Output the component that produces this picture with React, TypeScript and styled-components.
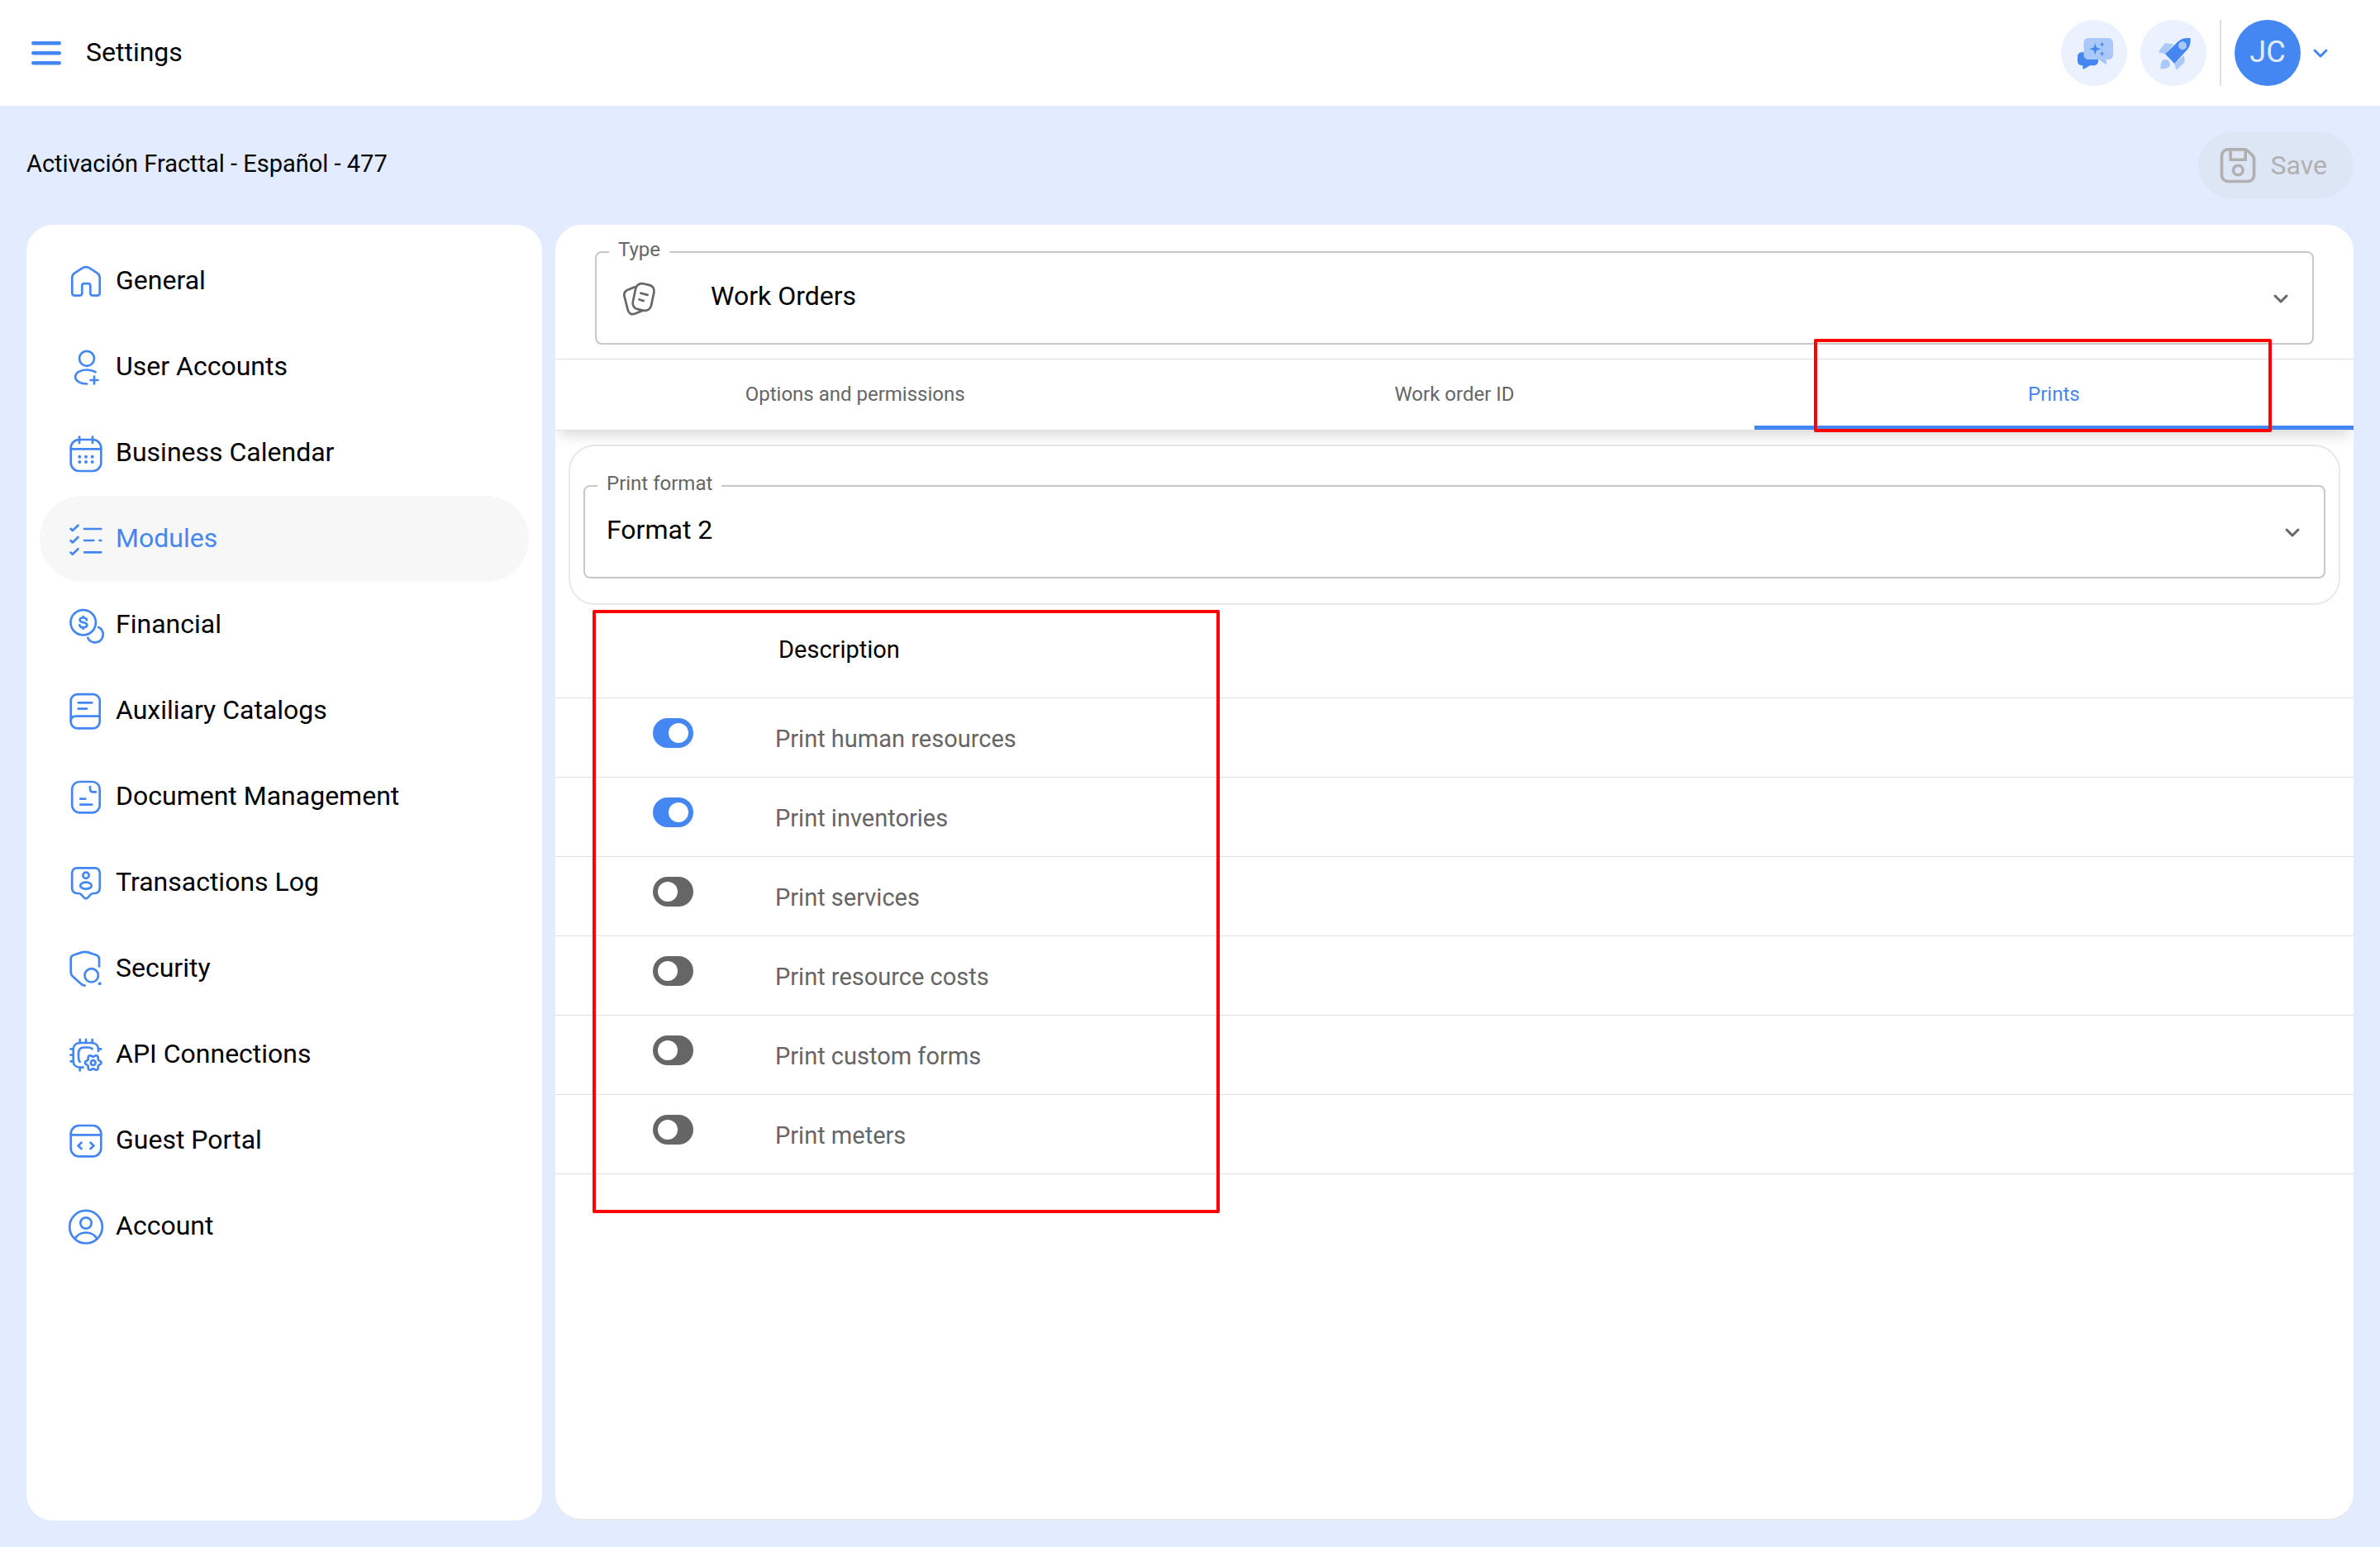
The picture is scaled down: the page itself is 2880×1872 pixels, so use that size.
import React, { useState } from 'react';
import styled, { createGlobalStyle, css } from 'styled-components';

const color = {
  blue: '#4587f2',
  blueSoft: '#aac8fa',
  blueTint: '#ebf2fe',
  page: '#e3ecfe',
  text: '#000000',
  muted: '#666666',
  outline: '#c8c8c8',
  line: '#dfdfdf',
  disabled: '#b0b0b0',
  alert: '#ff0000',
};

const GlobalStyle = createGlobalStyle`
  *, *::before, *::after { box-sizing: border-box; }
  body {
    margin: 0;
    background: ${color.page};
    color: ${color.text};
    font-family: Roboto, "Noto Sans", sans-serif;
    font-size: 32px;
  }
  button, select, input { font: inherit; }
  button { padding: 0; border: 0; background: none; cursor: pointer; }
  h1, h2 { margin: 0; font-weight: 400; }
`;

const Page = styled.div`
  min-height: 100vh;
  display: flex;
  flex-direction: column;
`;

/* ---------- top bar ---------- */

const TopBar = styled.header`
  height: 128px;
  padding: 0 48px 0 32px;
  display: flex;
  align-items: center;
  justify-content: space-between;
  background: #fff;
`;

const TopGroup = styled.div<{ $gap: number }>`
  display: flex;
  align-items: center;
  gap: ${(p) => p.$gap}px;
`;

const MenuButton = styled.button`
  display: flex;
  width: 48px;
  height: 48px;
  color: ${color.blue};
`;

const PageTitle = styled.h1`
  padding-bottom: 2px;
  font-size: 32px;
  line-height: 40px;
`;

const RoundButton = styled.button`
  display: flex;
  width: 80px;
  height: 80px;
  border-radius: 50%;
  background: ${color.blueTint};
`;

const TopDivider = styled.div`
  width: 2px;
  height: 80px;
  background: #e0e0e0;
`;

const AccountButton = styled.button`
  display: flex;
  align-items: center;
  color: ${color.blue};
`;

const Avatar = styled.span`
  display: flex;
  align-items: center;
  justify-content: center;
  width: 80px;
  height: 80px;
  padding-bottom: 2px;
  border-radius: 50%;
  background: ${color.blue};
  color: ${color.page};
  font-size: 36px;
`;

/* ---------- content frame ---------- */

const Content = styled.main`
  flex: 1;
  display: flex;
  flex-direction: column;
  gap: 32px;
  padding: 32px;
`;

const ContentHeader = styled.div`
  display: flex;
  align-items: center;
  justify-content: space-between;
  height: 80px;
`;

const CompanyName = styled.h2`
  padding-bottom: 4px;
  font-size: 29px;
  line-height: 36px;
`;

const SaveButton = styled.button`
  display: flex;
  align-items: center;
  gap: 16px;
  height: 80px;
  padding: 0 32px 0 24px;
  border-radius: 40px;
  background: #dde6f5;
  color: ${color.disabled};
  font-size: 32px;
  cursor: default;
`;

const Columns = styled.div`
  flex: 1;
  display: flex;
  gap: 16px;
`;

/* ---------- side menu ---------- */

const SideMenu = styled.nav`
  flex: 0 0 624px;
  padding: 16px;
  border-radius: 32px;
  background: #fff;
`;

const MenuLink = styled.a<{ $active?: boolean }>`
  display: flex;
  align-items: center;
  gap: 12px;
  height: 104px;
  padding: 0 32px;
  border-radius: 52px;
  background: ${(p) => (p.$active ? '#f7f7f7' : 'transparent')};
  color: ${(p) => (p.$active ? color.blue : color.text)};
  font-size: 32px;
  line-height: 40px;
  text-decoration: none;

  svg { color: ${color.blue}; }
  span { padding-bottom: 2px; }
`;

const Glyph = styled.svg`
  flex: none;
  display: block;
  fill: none;
  stroke: currentColor;
  stroke-width: 2.7;
  stroke-linecap: round;
  stroke-linejoin: round;
`;

/* ---------- settings panel ---------- */

const Panel = styled.section`
  flex: 1;
  min-width: 0;
  border-bottom: 2px solid #e8e8e8;
  border-radius: 32px;
  background: #fff;
  overflow: hidden;
`;

const TypeSection = styled.div`
  padding: 32px 48px 17px;
  border-bottom: 1px solid ${color.line};
`;

const Field = styled.div`
  position: relative;
  height: 113px;
  border: 2px solid ${color.outline};
  border-radius: 8px;
`;

const FieldLabel = styled.label`
  position: absolute;
  top: -18px;
  left: 15px;
  padding: 0 11px;
  background: #fff;
  color: ${color.muted};
  font-size: 24px;
  line-height: 28px;
`;

const FieldSelect = styled.select<{ $withIcon?: boolean }>`
  appearance: none;
  display: block;
  width: 100%;
  height: 100%;
  padding: 0 80px 6px ${(p) => (p.$withIcon ? 138 : 26)}px;
  border: 0;
  outline: 0;
  background: transparent;
  color: ${color.text};
  font-size: 32px;
`;

const FieldIcon = styled.span<{ $side: 'left' | 'right' }>`
  position: absolute;
  top: 0;
  bottom: 0;
  display: flex;
  align-items: center;
  color: ${color.muted};
  pointer-events: none;
  ${(p) =>
    p.$side === 'left'
      ? css`left: 28px;`
      : css`right: 14px;`}
`;

const TabBar = styled.div`
  position: relative;
  display: grid;
  grid-template-columns: repeat(3, 1fr);
  border-bottom: 1px solid ${color.line};
  box-shadow: 0 10px 16px -5px rgba(0, 0, 0, 0.16);
`;

const TabCell = styled.div`
  position: relative;
`;

const Tab = styled.button<{ $active?: boolean }>`
  display: block;
  width: 100%;
  height: 85px;
  padding-top: 4px;
  border-bottom: 5px solid ${(p) => (p.$active ? color.blue : 'transparent')};
  color: ${(p) => (p.$active ? color.blue : color.muted)};
  font-size: 24px;
  line-height: 28px;
`;

const TabHighlight = styled.div`
  position: absolute;
  z-index: 1;
  top: -25px;
  bottom: -3px;
  left: 72px;
  right: 99px;
  border: 4px solid ${color.alert};
  border-radius: 2px;
  pointer-events: none;
`;

const FormatCard = styled.div`
  margin: 17px 16px 0;
  padding: 47px 16px 30px;
  border: 2px solid #e9e9e9;
  border-radius: 32px;
`;

const TableArea = styled.div`
  position: relative;
`;

const TableHighlight = styled.div`
  position: absolute;
  top: 6px;
  bottom: -47px;
  left: 45px;
  width: 759px;
  border: 4px solid ${color.alert};
  border-radius: 2px;
  pointer-events: none;
`;

const OptionTable = styled.table`
  width: 100%;
  table-layout: fixed;
  border-collapse: separate;
  border-spacing: 0;
  font-size: 29px;
  line-height: 36px;
`;

const HeadCell = styled.th<{ $width?: number }>`
  width: ${(p) => (p.$width ? `${p.$width}px` : 'auto')};
  height: 113px;
  padding: 0 0 4px 4px;
  border-bottom: 1px solid ${color.line};
  font-weight: 400;
  text-align: left;
`;

const SwitchCell = styled.td`
  height: 96px;
  padding: 0 0 12px 118px;
  border-bottom: 1px solid ${color.line};
`;

const TextCell = styled.td`
  height: 96px;
  padding: 2px 0 0;
  border-bottom: 1px solid ${color.line};
  color: ${color.muted};
`;

const Switch = styled.input`
  appearance: none;
  display: block;
  width: 49px;
  height: 36px;
  margin: 0;
  padding: 6px;
  border-radius: 18px;
  background: ${color.muted};
  cursor: pointer;

  &::before {
    content: '';
    display: block;
    width: 24px;
    height: 24px;
    border-radius: 50%;
    background: #fff;
  }
  &:checked { background: ${color.blue}; }
  &:checked::before { margin-left: 13px; }
`;

/* ---------- drawings ---------- */

const Icon = ({ children }: { children: React.ReactNode }) => (
  <Glyph width={48} height={48} viewBox="0 0 48 48" aria-hidden="true">
    {children}
  </Glyph>
);

const Chevron = () => (
  <Icon>
    <path d="M17 21l7 7 7-7" strokeWidth="3" />
  </Icon>
);

const gearPath = (cx: number, cy: number) => {
  const points = Array.from({ length: 72 }, (_, i) => {
    const a = (i / 72) * Math.PI * 2;
    const r = 8.5 + 1.3 * Math.cos(6 * a);
    return `${(cx + r * Math.cos(a)).toFixed(2)} ${(cy + r * Math.sin(a)).toFixed(2)}`;
  });
  return `M${points.join('L')}Z`;
};

const dot = (x: number, y: number, r = 2) => (
  <circle key={`${x}-${y}`} cx={x} cy={y} r={r} fill="currentColor" stroke="none" />
);

const icons = {
  general: (
    <path d="M7.3 20c0-2.3.9-4 2.8-5.3l8.8-5.9c3.3-2.2 6.9-2.2 10.2 0l8.8 5.9c1.9 1.3 2.8 3 2.8 5.3v18.7a3 3 0 0 1-3 3h-5.4a3 3 0 0 1-3-3V29.7a2.6 2.6 0 0 0-2.6-2.6h-4.8a2.6 2.6 0 0 0-2.6 2.6v9a3 3 0 0 1-3 3h-6a3 3 0 0 1-3-3z" />
  ),
  users: (
    <>
      <circle cx="25" cy="13.8" r="9" />
      <path d="M35.5 30.2C32.5 28.4 29 27.5 25 27.5c-7.6 0-13.8 3.6-13.8 8.5s6 8.5 14 8.500M34 35.5v9M29.5 40h9" />
    </>
  ),
  calendar: (
    <>
      <rect x="5.7" y="8" width="36.6" height="38" rx="10" />
      <path d="M5.7 19.3h36.6M16 4.5v7.5M32 4.5v7.5" />
      {[28.7, 35].map((y) => [16.3, 24, 31.7].map((x) => dot(x, y)))}
    </>
  ),
  modules: (
    <path d="M5.5 12l2.3 2.1 6.7-6.400M22 12h20.3M5.5 26.3l2.3 2.1 6.7-6.4M22 26h11.3M40.5 26h1.8M5.5 40.6l2.3 2.1 6.7-6.4M22 40.3h20.3" />
  ),
  financial: (
    <>
      <circle cx="20.7" cy="21.3" r="15.2" />
      <path d="M25 18.3c-.2-1.8-1.8-2.8-4.2-2.8-2.6 0-4.2 1.1-4.2 2.8 0 4.2 8.7 1.8 8.7 6 0 1.9-1.8 3-4.5 3s-4.4-1.2-4.5-3.2M20.7 14v1.5M20.7 27.3v1.5" />
      <path d="M39.2 27a9.7 9.7 0 1 1-12.9 13" />
    </>
  ),
  catalogs: (
    <>
      <rect x="5.7" y="4.1" width="35" height="41.2" rx="8" />
      <path d="M40.7 30.7H12c-3.8 0-6.3 2.2-6.3 6M14.7 14.3h16.6M14.7 21.7h10.3" />
    </>
  ),
  documents: (
    <>
      <rect x="7.2" y="6" width="33.5" height="37.4" rx="9" />
      <path d="M29 12v2.5c0 2.6 1.3 3.9 3.9 3.9H36M17.3 26.7h6M17.3 33.7h14" />
    </>
  ),
  transactions: (
    <>
      <path d="M13.2 6.3h21.6a6 6 0 0 1 6 6V31a6 6 0 0 1-6 6h-1.6c-1.6 0-2.6.5-3.6 1.6l-3.3 3.5c-1.6 1.6-3 1.6-4.6 0l-3.3-3.5C17.4 37.5 16.4 37 14.8 37h-1.6a6 6 0 0 1-6-6V12.3a6 6 0 0 1 6-6z" />
      <circle cx="24" cy="15.3" r="3.6" />
      <ellipse cx="24" cy="27.7" rx="6.8" ry="4" />
    </>
  ),
  security: (
    <>
      <path d="M40 21.5v-9c0-2.5-1-4-3.3-4.8l-10.2-3.3c-2.6-.8-4.9-.8-7.5 0L8.9 7.7C6.7 8.5 5.7 10 5.7 12.500V28c0 2.5.8 4.3 2.8 6l9.5 8.4c1.5 1.3 2.9 2 4.7 2.2" />
      <circle cx="30.7" cy="32.3" r="8.2" />
      {dot(40.7, 42.3)}
    </>
  ),
  api: (
    <>
      <path d="M39 20V18c0-5-3-8-8-8H17c-5 0-8.3 3-8.3 8v13.7c0 5 3.3 8 8.3 8h3.5" />
      <path d="M16.7 5.9v4M24 5.9v4M31.7 5.9v4M5.5 17.3h3M5.5 24.7h3M5.5 32.3h3M39.3 17.3h3M16.7 39.8v3.7" />
      <path d="M16.6 33c-1.3-1.7-1.6-3.3-1.6-5.3v-5.2c0-4.8 2.2-7 7-7h4.5c2 0 3.6.4 5 1.6" />
      <path d={gearPath(32.7, 34)} />
      <circle cx="32.7" cy="34" r="2.9" />
    </>
  ),
  portal: (
    <>
      <rect x="5.7" y="6" width="36.6" height="37.4" rx="10" />
      <path d="M5.7 17.3h36.6M18.5 26.7l-4 3.7 4 3.7M29.5 26.7l4 3.7-4 3.7" />
    </>
  ),
  account: (
    <>
      <circle cx="24" cy="24.7" r="19.8" />
      <circle cx="24" cy="20" r="6.7" />
      <path d="M11 38.5c2.7-4.3 7.3-7 13-7s10.3 2.7 13 7" />
    </>
  ),
};

const star = (x: number, y: number, r: number) => {
  const k = r * 0.24;
  return (
    <path
      fill={color.blue}
      d={`M${x} ${y - r}L${x + k} ${y - k}L${x + r} ${y}L${x + k} ${y + k}L${x} ${y + r}L${x - k} ${y + k}L${x - r} ${y}L${x - k} ${y - k}Z`}
    />
  );
};

const AssistantIcon = () => (
  <svg width="80" height="80" viewBox="0 0 80 80" aria-hidden="true">
    <path
      fill={color.blue}
      d="M25 39.3h15a5 5 0 0 1 5 5v6a5 5 0 0 1-5 5h-4.7l-7.6 4.3c-.8.4-1.4 0-1.4-.8v-3.5H25a5 5 0 0 1-5-5v-6a5 5 0 0 1 5-5z"
    />
    <path
      fill={color.blueSoft}
      d="M33 22h24.5a5.5 5.5 0 0 1 5.5 5.5v15a5.5 5.5 0 0 1-5.5 5.5H55v5c0 .9-.6 1.2-1.4.8L45.5 48H33a5.5 5.5 0 0 1-5.5-5.5v-15A5.5 5.5 0 0 1 33 22z"
    />
    {star(41.3, 35.3, 7)}
    {star(49.7, 29.7, 3.4)}
    {star(49.7, 41, 3.4)}
  </svg>
);

const RocketIcon = () => (
  <svg width="80" height="80" viewBox="0 0 80 80" aria-hidden="true">
    <g fill={color.blueSoft}>
      <path d="M30 41.3l-6.8-1.6c-1-.3-1.2-1.1-.6-2l6-8c.9-1.2 1.9-1.7 3.4-1.5l8.5 1.2z" />
      <path d="M41.3 53l1.5 6c.3 1.1 1.2 1.3 2.1.6l7.3-6.9c1.3-1.2 1.7-2.2 1.5-3.7l-1-6z" />
      <path d="M30.3 47.8a5.6 5.6 0 0 1 5.6 5.7c0 4-3 5.7-11 5.9-.5 0-.8-.3-.7-.8.5-7.5 2.4-10.8 6.1-10.8z" />
    </g>
    <path
      fill={color.blue}
      d="M30 41.3L46.5 25.5C50 22.5 54.5 21.7 59.5 22c.8 0 1.2.4 1.2 1.2.2 5-.8 9.3-3.9 12.8L41.3 53z"
    />
    <circle cx="51" cy="31.3" r="5" fill={color.blueSoft} />
  </svg>
);

/* ---------- data ---------- */

const menu: { id: keyof typeof icons; label: string }[] = [
  { id: 'general', label: 'General' },
  { id: 'users', label: 'User Accounts' },
  { id: 'calendar', label: 'Business Calendar' },
  { id: 'modules', label: 'Modules' },
  { id: 'financial', label: 'Financial' },
  { id: 'catalogs', label: 'Auxiliary Catalogs' },
  { id: 'documents', label: 'Document Management' },
  { id: 'transactions', label: 'Transactions Log' },
  { id: 'security', label: 'Security' },
  { id: 'api', label: 'API Connections' },
  { id: 'portal', label: 'Guest Portal' },
  { id: 'account', label: 'Account' },
];

const tabs = ['Options and permissions', 'Work order ID', 'Prints'];

const initialOptions = [
  { id: 'human-resources', label: 'Print human resources', on: true },
  { id: 'inventories', label: 'Print inventories', on: true },
  { id: 'services', label: 'Print services', on: false },
  { id: 'resource-costs', label: 'Print resource costs', on: false },
  { id: 'custom-forms', label: 'Print custom forms', on: false },
  { id: 'meters', label: 'Print meters', on: false },
];

export default function App() {
  const [options, setOptions] = useState(initialOptions);

  const toggle = (id: string) =>
    setOptions((list) => list.map((o) => (o.id === id ? { ...o, on: !o.on } : o)));

  return (
    <Page>
      <GlobalStyle />
      <TopBar>
        <TopGroup $gap={24}>
          <MenuButton aria-label="Menu">
            <Icon>
              <path d="M8.3 12.3h31.4M8.3 24.3h31.4M8.3 36.3h31.4" strokeWidth="4.6" />
            </Icon>
          </MenuButton>
          <PageTitle>Settings</PageTitle>
        </TopGroup>
        <TopGroup $gap={16}>
          <RoundButton aria-label="Assistant">
            <AssistantIcon />
          </RoundButton>
          <RoundButton aria-label="Getting started">
            <RocketIcon />
          </RoundButton>
          <TopDivider />
          <AccountButton aria-label="Account menu">
            <Avatar>JC</Avatar>
            <Chevron />
          </AccountButton>
        </TopGroup>
      </TopBar>

      <Content>
        <ContentHeader>
          <CompanyName>Activación Fracttal - Español - 477</CompanyName>
          <SaveButton disabled>
            <Icon>
              <g strokeWidth="3.6">
                <path d="M12 4.9h19.5c1.9 0 3.3.5 4.6 1.8l5.6 5.4c1.3 1.2 1.9 2.5 1.9 4.4V36a7.5 7.5 0 0 1-7.5 7.5H12A7.5 7.5 0 0 1 4.5 36V12.4A7.5 7.5 0 0 1 12 4.9z" />
                <path d="M15.2 5v12.200h18V5.6" strokeLinejoin="miter" />
                <circle cx="24.3" cy="30" r="5.8" />
              </g>
            </Icon>
            Save
          </SaveButton>
        </ContentHeader>

        <Columns>
          <SideMenu aria-label="Settings">
            {menu.map((item) => (
              <MenuLink key={item.id} href={`#${item.id}`} $active={item.id === 'modules'}>
                <Icon>{icons[item.id]}</Icon>
                <span>{item.label}</span>
              </MenuLink>
            ))}
          </SideMenu>

          <Panel>
            <TypeSection>
              <Field>
                <FieldLabel htmlFor="type">Type</FieldLabel>
                <FieldIcon $side="left">
                  <Icon>
                    <path d="M18.3 10.3l-8.5 3.4c-3.7 1.5-5.1 4.2-4.2 8l4 16c1.1 4.7 4.4 6.6 8.9 4.9l9-3.6" />
                    <rect x="17.3" y="6.7" width="22.6" height="31.6" rx="7.5" transform="rotate(12 28.6 22.5)" />
                    <path d="M25.3 17.7l8.3 2.2M23.5 25.5l5.3 1.5" />
                  </Icon>
                </FieldIcon>
                <FieldSelect id="type" $withIcon defaultValue="Work Orders">
                  <option>Work Orders</option>
                </FieldSelect>
                <FieldIcon $side="right">
                  <Chevron />
                </FieldIcon>
              </Field>
            </TypeSection>

            <TabBar role="tablist">
              {tabs.map((name) => (
                <TabCell key={name} role="presentation">
                  <Tab role="tab" aria-selected={name === 'Prints'} $active={name === 'Prints'}>
                    {name}
                  </Tab>
                  {name === 'Prints' && <TabHighlight />}
                </TabCell>
              ))}
            </TabBar>

            <FormatCard>
              <Field>
                <FieldLabel htmlFor="format">Print format</FieldLabel>
                <FieldSelect id="format" defaultValue="Format 2">
                  <option>Format 2</option>
                </FieldSelect>
                <FieldIcon $side="right">
                  <Chevron />
                </FieldIcon>
              </Field>
            </FormatCard>

            <TableArea>
              <OptionTable>
                <thead>
                  <tr>
                    <HeadCell $width={266} aria-label="Enabled" />
                    <HeadCell>Description</HeadCell>
                  </tr>
                </thead>
                <tbody>
                  {options.map((o) => (
                    <tr key={o.id}>
                      <SwitchCell>
                        <Switch
                          type="checkbox"
                          role="switch"
                          id={o.id}
                          checked={o.on}
                          onChange={() => toggle(o.id)}
                        />
                      </SwitchCell>
                      <TextCell>
                        <label htmlFor={o.id}>{o.label}</label>
                      </TextCell>
                    </tr>
                  ))}
                </tbody>
              </OptionTable>
              <TableHighlight />
            </TableArea>
          </Panel>
        </Columns>
      </Content>
    </Page>
  );
}
